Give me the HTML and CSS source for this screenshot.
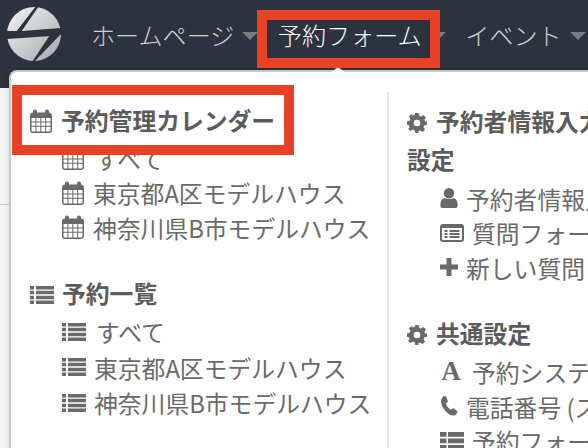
FILE: index.html
```html
<!DOCTYPE html>
<html lang="ja">
<head>
  <meta charset="UTF-8">
  <title>予約フォーム</title>
  <link rel="stylesheet" href="styles.css">
</head>
<body>

  <svg width="0" height="0" class="defs">
    <defs>
      <linearGradient id="logo-fill" x1="0" y1="0" x2="1" y2="1">
        <stop offset="0" stop-color="#f4f4f4"/>
        <stop offset="1" stop-color="#a4a7ab"/>
      </linearGradient>
      <symbol id="i-calendar" viewBox="0 0 22 24">
        <path fill-rule="evenodd" d="M5 0.500a2 2 0 0 1 2 2V3.500h8V2.500a2 2 0 0 1 4 0V3.600A3 3 0 0 1 22 6.500V21a3 3 0 0 1-3 3H3a3 3 0 0 1-3-3V6.500A3 3 0 0 1 3 3.600V2.500a2 2 0 0 1 2-2zM1.500 9v3.400h3.900V9zm4.900 0v3.400h3.900V9zm4.900 0v3.400h3.900V9zm4.900 0v3.400h4.300V9zM1.500 13.400v3.400h3.900v-3.400zm4.900 0v3.400h3.900v-3.400zm4.900 0v3.400h3.900v-3.400zm4.900 0v3.400h4.300v-3.400zM1.500 17.800V21A1.500 1.500 0 0 0 3 22.500h2.400v-4.700zm4.900 0v4.700h3.900v-4.700zm4.900 0v4.700h3.900v-4.700zm4.900 0v4.700H19a1.500 1.500 0 0 0 1.500-1.500v-3.200z"/>
      </symbol>
      <symbol id="i-list" viewBox="0 0 24 18">
        <path d="M0 0h4v3.500H0zM6 0h18v3.500H6zM0 4.800h4v3.500H0zM6 4.800h18v3.500H6zM0 9.700h4v3.500H0zM6 9.700h18v3.500H6zM0 14.500h4V18H0zM6 14.500h18V18H6z"/>
      </symbol>
      <symbol id="i-gear" viewBox="0 0 24 24">
        <path fill-rule="evenodd" d="M10 0h4l.7 3.300 2.300 1 2.900-1.800 2.800 2.800-1.800 2.900 1 2.300L24 10v4l-3.100.7-1 2.300 1.800 2.900-2.800 2.800-2.900-1.800-2.300 1L14 24h-4l-.7-3.100-2.300-1-2.900 1.800-2.800-2.800L3.100 17l-1-2.300L0 14v-4l3.100-.7 1-2.300-1.800-2.900 2.800-2.800L7 3.100l2.300-1zM12 8a4 4 0 1 0 0 8 4 4 0 0 0 0-8z"/>
      </symbol>
      <symbol id="i-user" viewBox="0 0 18 21">
        <circle cx="9" cy="5.500" r="5.500"/>
        <path d="M4.500 10.500C6 12 12 12 13.500 10.500 16 11 18 13 18 17v2a2 2 0 0 1-2 2H2a2 2 0 0 1-2-2v-2c0-4 2-6 4.500-6.500z"/>
      </symbol>
      <symbol id="i-form" viewBox="0 0 24 18">
        <path fill-rule="evenodd" d="M3 0h18a3 3 0 0 1 3 3v12a3 3 0 0 1-3 3H3a3 3 0 0 1-3-3V3a3 3 0 0 1 3-3zm-1 4v11a1 1 0 0 0 1 1h18a1 1 0 0 0 1-1V4zm2.500 2h3v2h-3zm5 0h10v2h-10zm-5 3h3v2h-3zm5 0h10v2h-10zm-5 3h3v2h-3zm5 0h10v2h-10z"/>
      </symbol>
      <symbol id="i-plus" viewBox="0 0 18 18">
        <path d="M6.500 0h5v6.500H18v5h-6.500V18h-5v-6.500H0v-5h6.500z"/>
      </symbol>
      <symbol id="i-phone" viewBox="0 0 18 20">
        <path d="M3 0.500 6 0l2 5.500-2.300 2c.8 2.500 2.800 5 5 6.300l2.500-1.800 4.500 3.500-1.500 3C14 20 11 20 7.500 17 3.500 13.500 0.500 8 1 4z"/>
      </symbol>
      <symbol id="i-table" viewBox="0 0 24 18">
        <path d="M0 0h6.500v4.800H0zM8 0h16v4.800H8zM0 6.500h6.500v4.800H0zM8 6.500h16v4.800H8zM0 13h6.500v5H0zM8 13h16v5H8z"/>
      </symbol>
    </defs>
  </svg>

  <nav class="navbar">
    <svg class="logo" viewBox="0 0 54 54">
      <circle cx="27" cy="27" r="27" fill="url(#logo-fill)"/>
      <path d="M-1 24 15 24 55 21 55 27 44 29 -1 32z" fill="#2c333f"/>
      <path d="M29 -1 32 -1 14 25 9 25z" fill="#2c333f"/>
      <path d="M43 28 55 26 27 55 25 55z" fill="#2c333f"/>
    </svg>
    <a class="nav-item">ホームページ<i class="caret"></i></a>
    <a class="nav-item active">予約フォーム<i class="caret"></i></a>
    <a class="nav-item">イベント<i class="caret"></i></a>
  </nav>

  <div class="page-rule"></div>

  <div class="dropdown">
    <div class="col col-left">
      <h4 class="menu-head"><svg class="icon"><use href="#i-calendar"/></svg>予約管理カレンダー</h4>
      <ul class="menu-list">
        <li><svg class="icon"><use href="#i-calendar"/></svg><span class="pad">すべて</span></li>
        <li><svg class="icon"><use href="#i-calendar"/></svg>東京都A区モデルハウス</li>
        <li><svg class="icon"><use href="#i-calendar"/></svg>神奈川県B市モデルハウス</li>
      </ul>
      <h4 class="menu-head second"><svg class="icon list"><use href="#i-list"/></svg>予約一覧</h4>
      <ul class="menu-list lists">
        <li><svg class="icon list"><use href="#i-list"/></svg><span class="pad">すべて</span></li>
        <li><svg class="icon list"><use href="#i-list"/></svg>東京都A区モデルハウス</li>
        <li><svg class="icon list"><use href="#i-list"/></svg>神奈川県B市モデルハウス</li>
      </ul>
    </div>
    <div class="col col-right">
      <h4 class="menu-head"><svg class="icon gear"><use href="#i-gear"/></svg>予約者情報入力<br>設定</h4>
      <ul class="menu-list upper">
        <li><svg class="icon user"><use href="#i-user"/></svg>予約者情報入</li>
        <li><svg class="icon form"><use href="#i-form"/></svg>質問フォー</li>
        <li><svg class="icon user"><use href="#i-plus"/></svg>新しい質問</li>
      </ul>
      <h4 class="menu-head third"><svg class="icon gear"><use href="#i-gear"/></svg>共通設定</h4>
      <ul class="menu-list lower">
        <li><span class="glyph-a">A</span>予約システ</li>
        <li><svg class="icon user"><use href="#i-phone"/></svg>電話番号 (ス</li>
        <li><svg class="icon form"><use href="#i-table"/></svg>予約フォー</li>
      </ul>
    </div>
  </div>

  <div class="notch"></div>
  <div class="mark mark-nav"></div>
  <div class="mark mark-head"></div>

</body>
</html>
```

FILE: styles.css
```css
html, body {
  margin: 0;
  height: 100%;
}

body {
  position: relative;
  overflow: hidden;
  background: #f6f6f6;
  color: #666;
  font-family: "Noto Sans CJK JP", "Noto Sans", sans-serif;
}

.defs {
  position: absolute;
}

.navbar {
  display: flex;
  align-items: center;
  height: 88px;
  background: #2c333f;
  box-sizing: border-box;
  padding: 0 0 20px 7px;
  white-space: nowrap;
}

.logo {
  width: 54px;
  height: 54px;
  margin-right: 30px;
  flex: none;
}

.nav-item {
  display: flex;
  align-items: center;
  color: #d0d0d0;
  font-size: 24.100px;
  font-weight: 300;
  margin-right: 19.500px;
}

.nav-item.active {
  color: #fff;
}

.caret {
  display: block;
  width: 0;
  height: 0;
  margin: 3px 0 0 8px;
  border-left: 8px solid transparent;
  border-right: 8px solid transparent;
  border-top: 8px solid #777a7f;
}

.page-rule {
  position: absolute;
  left: 0;
  top: 204px;
  width: 9px;
  height: 1px;
  background: #c9c9c9;
}

.dropdown {
  position: absolute;
  left: 9px;
  top: 70px;
  width: 640px;
  height: 420px;
  box-sizing: border-box;
  display: flex;
  background: #fff;
  border: 2px solid #c8c8c8;
  border-right: 0;
  border-bottom: 0;
  border-radius: 8px 0 0 0;
  box-shadow: 0 0 6px rgba(0, 0, 0, 0.15);
  padding-top: 20px;
}

.notch {
  position: absolute;
  left: 330px;
  top: 67px;
  width: 0;
  height: 0;
  border-left: 8px solid transparent;
  border-right: 8px solid transparent;
  border-bottom: 6px solid #fff;
}

.col {
  box-sizing: border-box;
}

.col-left {
  width: 376px;
  padding: 8px 0 0 19px;
}

.col-right {
  flex: 1;
  border-left: 2px solid #e6e6e6;
  padding: 10px 0 0 18px;
}

.menu-head {
  margin: 0;
  font-size: 23.800px;
  font-weight: 700;
  line-height: 40px;
  color: #5c5c5c;
  white-space: nowrap;
}

.col-right .menu-head {
  line-height: 38px;
}

.menu-head.second {
  margin-top: 28.500px;
}

.menu-head.third {
  margin-top: 29px;
}

.menu-list {
  list-style: none;
  margin: 1px 0 0;
  padding: 0 0 0 32px;
  white-space: nowrap;
}

.col-right .menu-list {
  padding-left: 33px;
}

.menu-list.upper {
  margin-top: 3px;
}

.menu-list.lower {
  margin-top: 3px;
}

.menu-list li {
  display: flex;
  align-items: center;
  height: 34.500px;
  font-size: 23.800px;
  font-weight: 400;
  color: #6a6a6a;
}

.menu-list.lists li {
  height: 35.500px;
}

.icon {
  flex: none;
  width: 22px;
  height: 24px;
  margin-right: 9px;
  fill: #6a6a6a;
  vertical-align: -3px;
}

.icon.list {
  width: 24px;
  height: 18px;
  margin-right: 8px;
  vertical-align: -1px;
}

.icon.gear {
  width: 20px;
  height: 20px;
  margin-right: 9px;
  vertical-align: -2px;
}

.icon.user {
  width: 18px;
  height: 20px;
  margin-right: 8px;
}

.icon.form {
  width: 24px;
  height: 18px;
  margin-right: 8px;
}

.pad {
  padding-left: 2px;
}

.glyph-a {
  width: 22px;
  margin-right: 10px;
  font-family: "Liberation Serif", serif;
  font-weight: 700;
  font-size: 27px;
  text-align: center;
}

.mark {
  position: absolute;
  box-sizing: border-box;
  border: 10px solid #e94125;
}

.mark-nav {
  left: 257px;
  top: 10px;
  width: 183px;
  height: 58px;
}

.mark-head {
  left: 12px;
  top: 85px;
  width: 282px;
  height: 70px;
}
```
